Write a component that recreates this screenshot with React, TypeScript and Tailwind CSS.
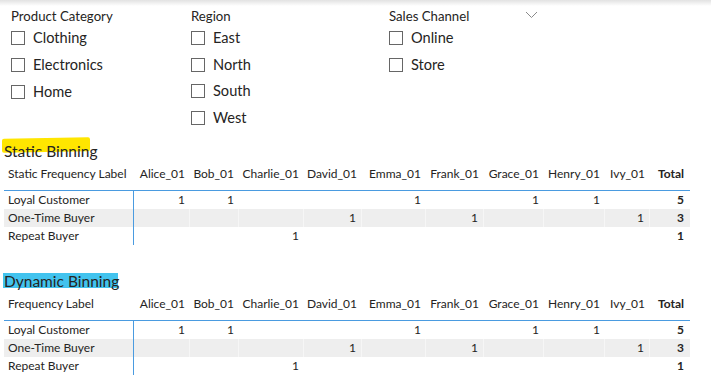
import React from "react";

const font = { fontFamily: '"Segoe UI", Lato, "Noto Sans", sans-serif' };

const cols = [
  { name: "Alice_01", w: "w-[56px]" },
  { name: "Bob_01", w: "w-[49px]" },
  { name: "Charlie_01", w: "w-[65px]" },
  { name: "David_01", w: "w-[58px]" },
  { name: "Emma_01", w: "w-[64px]" },
  { name: "Frank_01", w: "w-[58px]" },
  { name: "Grace_01", w: "w-[60px]" },
  { name: "Henry_01", w: "w-[61px]" },
  { name: "Ivy_01", w: "w-[45px]" },
];

const rows: { label: string; vals: (number | null)[]; total: number; shaded: boolean }[] = [
  { label: "Loyal Customer", vals: [1, 1, null, null, 1, null, 1, 1, null], total: 5, shaded: false },
  { label: "One-Time Buyer", vals: [null, null, null, 1, null, 1, null, null, 1], total: 3, shaded: true },
  { label: "Repeat Buyer", vals: [null, null, 1, null, null, null, null, null, null], total: 1, shaded: false },
];

function Checkbox({ label }: { label: string }) {
  return (
    <div className="flex items-center h-[26.7px] gap-[8px]">
      <div className="w-[14px] h-[14px] border border-[#666666] bg-white shrink-0" />
      <span className="text-[14.6px] leading-[18px] text-[#252423]">{label}</span>
    </div>
  );
}

function Slicer({ title, items, w }: { title: string; items: string[]; w: string }) {
  return (
    <div className={`${w} flex flex-col`}>
      <div className="h-[18px] pt-[1px] text-[13.2px] leading-[16px] text-[#252423]">{title}</div>
      {items.map((i) => (
        <Checkbox key={i} label={i} />
      ))}
    </div>
  );
}

function Matrix({ firstHeader }: { firstHeader: string }) {
  return (
    <div className="ml-[4px] w-[686px] text-[12px] leading-[16px] text-[#252423]">
      <div className="flex h-[34px] pt-[9px] border-b border-[#4a9be0]">
        <div className="w-[130px] pl-[4px]">{firstHeader}</div>
        {cols.map((c) => (
          <div key={c.name} className={`${c.w} text-right pr-[5px]`}>
            {c.name}
          </div>
        ))}
        <div className="w-[40px] text-right pr-[6px] font-bold">Total</div>
      </div>
      {rows.map((r) => (
        <div key={r.label} className={`flex h-[18px] items-center ${r.shaded ? "bg-[#eeeeee]" : ""}`}>
          <div className="w-[130px] h-full pl-[4px] flex items-center border-r border-[#4a9be0]">{r.label}</div>
          {r.vals.map((v, i) => (
            <div
              key={i}
              className={`${cols[i].w} h-full flex items-center justify-end pr-[5px] ${r.shaded ? "border-r border-[#f6f6f6]" : ""}`}
            >
              {v ?? ""}
            </div>
          ))}
          <div className="w-[40px] h-full flex items-center justify-end pr-[6px] font-bold">{r.total}</div>
        </div>
      ))}
    </div>
  );
}

export default function App() {
  return (
    <div className="w-[711px] h-[391px] bg-white overflow-hidden relative" style={font}>
      <div className="h-[6px] bg-gradient-to-b from-[#e2e2e2] to-white" />
      <div className="h-[125px] flex pl-[11px] pt-[1px] relative">
        <Slicer w="w-[180px]" title="Product Category" items={["Clothing", "Electronics", "Home"]} />
        <Slicer w="w-[198px]" title="Region" items={["East", "North", "South", "West"]} />
        <Slicer w="w-[140px]" title="Sales Channel" items={["Online", "Store"]} />
        <svg className="absolute left-[525px] top-[5px]" width="13" height="8" viewBox="0 0 13 8">
          <path d="M1 1 L6.5 6.5 L12 1" fill="none" stroke="#8a8a8a" strokeWidth="1" />
        </svg>
      </div>
      <div className="mt-[8px] relative h-[18px] pl-[4px]">
        <div className="absolute left-[2px] top-[-1px] w-[88px] h-[14px] bg-[#ffe600] rounded-[2px] -skew-y-1" />
        <span className="relative text-[15.5px] leading-[18px] text-[#252423]">Static Binning</span>
      </div>
      <Matrix firstHeader="Static Frequency Label" />
      <div className="mt-[24px] relative h-[18px] pl-[4px]">
        <div className="absolute left-[3px] top-[4px] w-[115px] h-[15px] bg-[#42c3ee]" />
        <span className="relative text-[15.5px] leading-[18px] text-[#252423]">Dynamic Binning</span>
      </div>
      <Matrix firstHeader="Frequency Label" />
    </div>
  );
}
